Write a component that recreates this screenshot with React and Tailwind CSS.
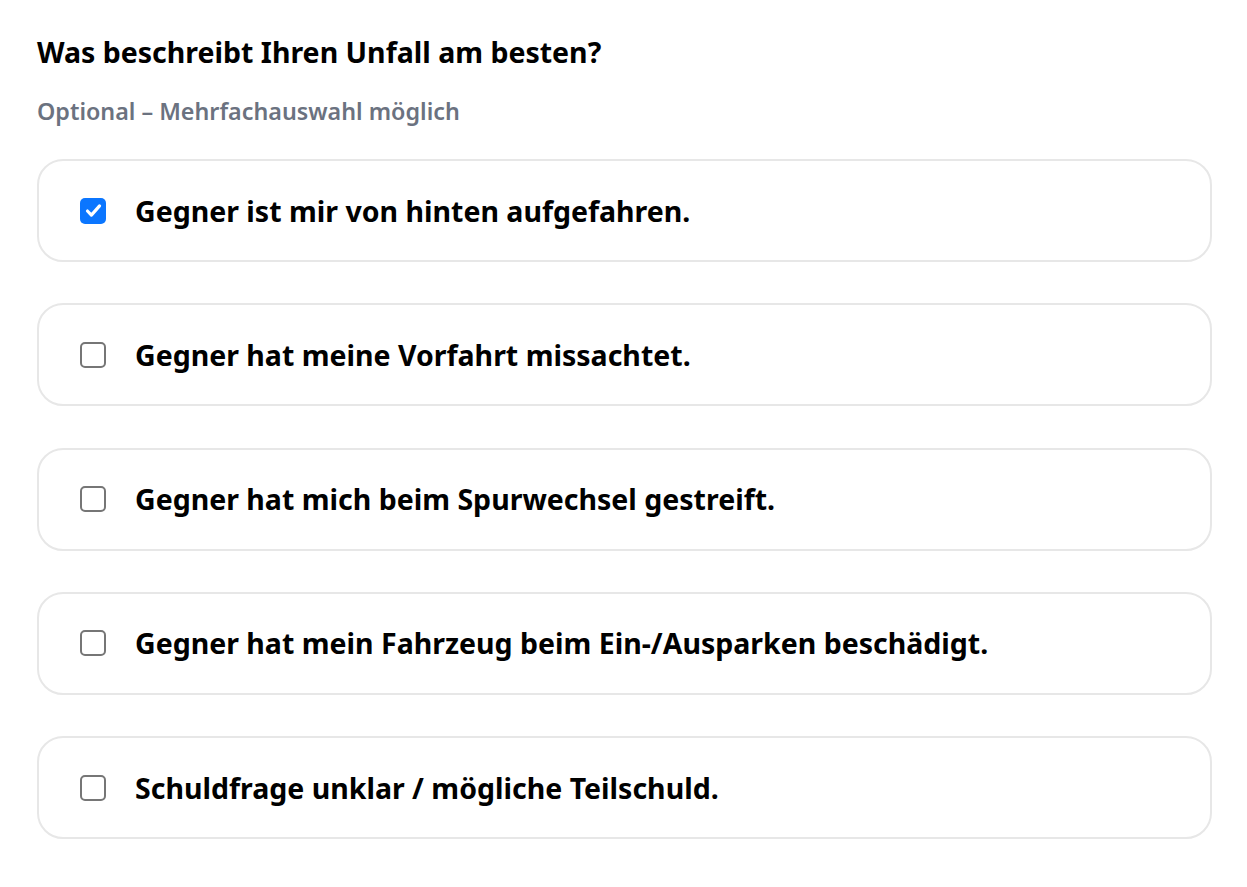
import { useState } from 'react';

const OPTIONS = [
  'Gegner ist mir von hinten aufgefahren.',
  'Gegner hat meine Vorfahrt missachtet.',
  'Gegner hat mich beim Spurwechsel gestreift.',
  'Gegner hat mein Fahrzeug beim Ein-/Ausparken beschädigt.',
  'Schuldfrage unklar / mögliche Teilschuld.',
];

const App = () => {
  const [checked, setChecked] = useState([true, false, false, false, false]);

  const toggle = (i) => {
    setChecked((prev) => prev.map((v, idx) => (idx === i ? !v : v)));
  };

  return (
    <div className="min-h-screen bg-white px-[37px] pt-[33px] font-['Noto_Sans','Open_Sans',sans-serif] text-black">
      <h2 className="text-[28.5px] font-bold leading-[38px]">Was beschreibt Ihren Unfall am besten?</h2>
      <p className="mt-[24px] text-[23.3px] font-semibold leading-[32px] text-[#6b7280]">
        Optional – Mehrfachauswahl möglich
      </p>

      <div className="mt-[32px] flex w-[1175px] flex-col gap-[41.3px]">
        {OPTIONS.map((label, i) => (
          <label
            key={label}
            className="flex h-[103px] cursor-pointer items-center gap-[29px] rounded-[26px] border-2 border-[#e7e7e7] px-[41px]"
          >
            <span
              onClick={(e) => {
                e.preventDefault();
                toggle(i);
              }}
              className={
                checked[i]
                  ? 'flex h-[26px] w-[26px] shrink-0 items-center justify-center rounded-[5px] bg-[#0b76ff]'
                  : 'flex h-[26px] w-[26px] shrink-0 items-center justify-center rounded-[5px] border-2 border-[#767676] bg-white'
              }
            >
              {checked[i] && (
                <svg viewBox="0 0 16 16" className="h-[21px] w-[21px]" fill="none">
                  <path d="M3.4 8.4l3 3.1 6.2-7" stroke="white" strokeWidth="2.4" strokeLinecap="round" strokeLinejoin="round" />
                </svg>
              )}
            </span>
            <span className="text-[28.5px] font-bold leading-[38px]">{label}</span>
          </label>
        ))}
      </div>
    </div>
  );
};

export default App;
